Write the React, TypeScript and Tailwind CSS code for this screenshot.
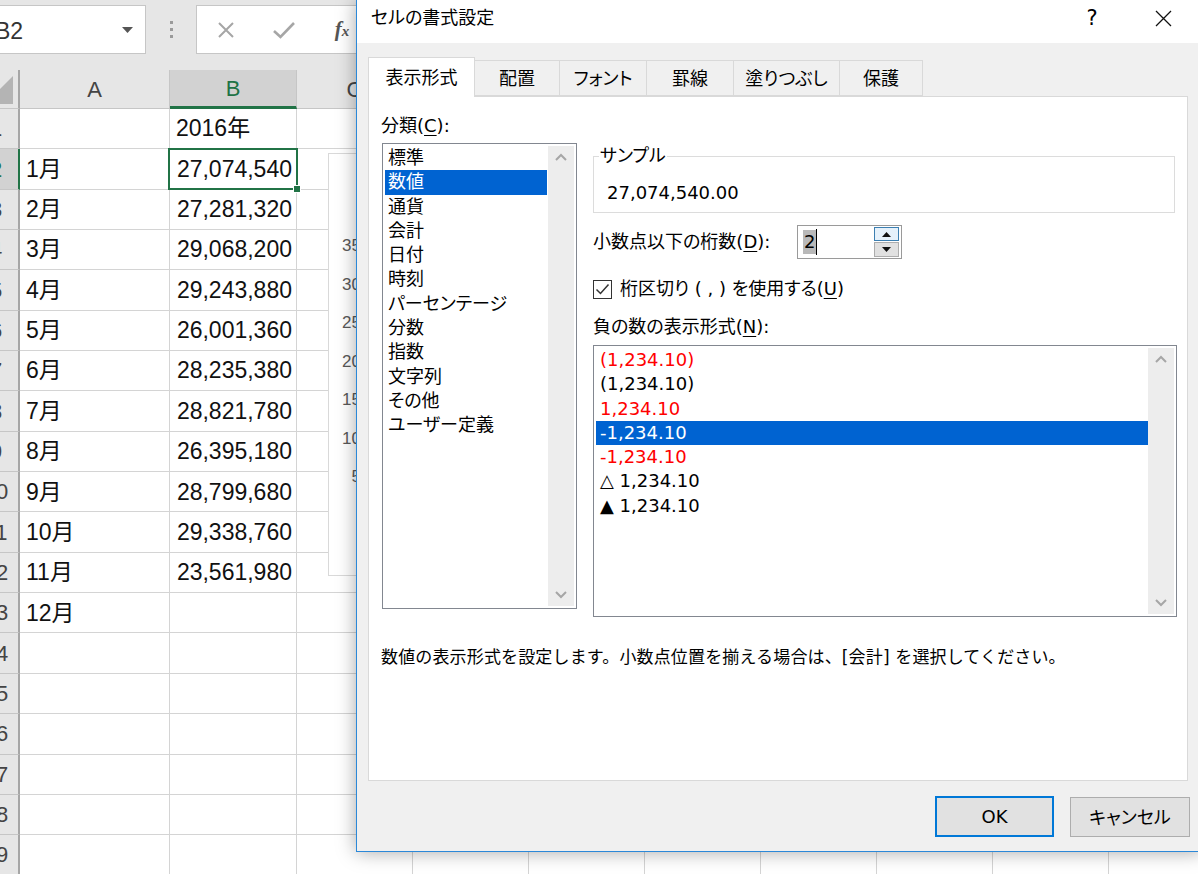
import React from "react";

const xl = "font-['Liberation_Sans','Noto_Sans_CJK_JP',sans-serif]";
const ui = "font-['DejaVu_Sans','Noto_Sans_CJK_JP',sans-serif] [font-feature-settings:'palt']";

const colWidths = ["w-[150px]", "w-[127px]", "w-[116px]", "w-[116px]", "w-[116px]", "w-[116px]", "w-[116px]", "w-[116px]", "w-[116px]", "w-[116px]"];
// only A-C are visible; the rest sit under the dialog
const colNames = ["A", "B", "C", "", "", "", "", "", "", ""];

const months = ["1月", "2月", "3月", "4月", "5月", "6月", "7月", "8月", "9月", "10月", "11月", "12月"];
const values = ["27,074,540", "27,281,320", "29,068,200", "29,243,880", "26,001,360", "28,235,380", "28,821,780", "26,395,180", "28,799,680", "29,338,760", "23,561,980", ""];

const categories = ["標準", "数値", "通貨", "会計", "日付", "時刻", "パーセンテージ", "分数", "指数", "文字列", "その他", "ユーザー定義"];

const negatives = [
  { text: "(1,234.10)", red: true },
  { text: "(1,234.10)", red: false },
  { text: "1,234.10", red: true },
  { text: "-1,234.10", red: false, selected: true },
  { text: "-1,234.10", red: true },
  { text: "△ 1,234.10", red: false },
  { text: "▲ 1,234.10", red: false },
];

const tabs = [
  { label: "配置", w: "w-[85px]" },
  { label: "フォント", w: "w-[87px]" },
  { label: "罫線", w: "w-[87px]" },
  { label: "塗りつぶし", w: "w-[106px]" },
  { label: "保護", w: "w-[83px]" },
];

function ScrollTrack() {
  return (
    <div className="w-[26px] shrink-0 bg-[#ededed] flex flex-col items-center justify-between py-[7px]">
      <svg width="12" height="8" viewBox="0 0 12 8">
        <path d="M1 7 L6 2 L11 7" fill="none" stroke="#a6a6a6" strokeWidth="2" />
      </svg>
      <svg width="12" height="8" viewBox="0 0 12 8">
        <path d="M1 1 L6 6 L11 1" fill="none" stroke="#a6a6a6" strokeWidth="2" />
      </svg>
    </div>
  );
}

function Sheet() {
  return (
    <div className={`${xl} absolute inset-0`}>
      {/* ribbon / formula bar */}
      <div className="flex h-[70px] pt-[5px]">
        <div className="-ml-[16px] w-[162px] h-[49px] bg-white border border-[#c6c6c6] flex items-center justify-between pl-[10px] pr-[12px] pt-[4px]">
          <span className="text-[23px] text-[#333]">B2</span>
          <svg width="11" height="6" viewBox="0 0 11 6" className="-mt-[4px]">
            <path d="M0 0 H11 L5.5 6 Z" fill="#555" />
          </svg>
        </div>
        <div className="w-[50px] flex flex-col items-center pt-[16px] gap-[4px]">
          <span className="w-[3px] h-[3px] bg-[#9a9a9a]" />
          <span className="w-[3px] h-[3px] bg-[#9a9a9a]" />
          <span className="w-[3px] h-[3px] bg-[#9a9a9a]" />
        </div>
        <div className="w-[700px] h-[49px] bg-white border border-[#c6c6c6] flex items-center">
          <div className="w-[58px] flex justify-center">
            <svg width="20" height="20" viewBox="0 0 20 20">
              <path d="M3 3 L17 17 M17 3 L3 17" stroke="#a6a6a6" strokeWidth="2" />
            </svg>
          </div>
          <div className="w-[58px] flex justify-center">
            <svg width="24" height="20" viewBox="0 0 24 20">
              <path d="M2 11 L8.5 17 L22 3" fill="none" stroke="#a6a6a6" strokeWidth="2.6" />
            </svg>
          </div>
          <div className="w-[58px] flex justify-center">
            <span className="font-['Liberation_Serif',serif] italic font-bold text-[21px] text-[#555]">
              f<span className="text-[15px]">x</span>
            </span>
          </div>
        </div>
      </div>

      {/* grid */}
      <div className="-ml-[26px]">
        <div className="flex h-[39px]">
          <div className="w-[46px] shrink-0 bg-[#e6e6e6] border-r-2 border-r-[#a6a6a6] border-b border-b-[#c6c6c6] flex items-end justify-end pr-[5px] pb-[4px]">
            <svg width="28" height="28" viewBox="0 0 28 28">
              <path d="M28 0 V28 H0 Z" fill="#b4b4b4" />
            </svg>
          </div>
          {colWidths.map((w, c) => (
            <div
              key={c}
              className={`${w} shrink-0 flex items-center justify-center text-[22px] border-r border-r-[#c6c6c6] ${
                c === 1 ? "bg-[#d2d2d2] text-[#217346] border-b-[3px] border-b-[#217346]" : "bg-[#e6e6e6] text-[#444] border-b border-b-[#c6c6c6]"
              }`}
            >
              {colNames[c]}
            </div>
          ))}
        </div>
        {Array.from({ length: 19 }, (_, i) => {
          const r = i + 1;
          const sel = r === 2;
          return (
            <div key={r} className="flex h-[40.35px]">
              <div
                className={`w-[46px] shrink-0 flex items-center justify-center text-[22px] border-b border-b-[#c6c6c6] border-r-2 ${
                  sel ? "bg-[#d2d2d2] text-[#217346] border-r-[#217346]" : "bg-[#e6e6e6] text-[#444] border-r-[#a6a6a6]"
                }`}
              >
                {r}
              </div>
              {colWidths.map((w, c) => {
                let content = "";
                let align = "justify-start pl-[6px]";
                if (c === 0 && r >= 2 && r <= 13) content = months[r - 2];
                if (c === 1 && r === 1) content = "2016年";
                if (c === 1 && r >= 2 && r <= 13) {
                  content = values[r - 2];
                  align = "justify-end pr-[4px]";
                }
                return (
                  <div
                    key={c}
                    className={`${w} shrink-0 relative bg-white border-r border-b border-[#d4d4d4] flex items-center ${align} text-[23px] text-[#111]`}
                  >
                    {content}
                    {c === 1 && sel && (
                      <div className="absolute -left-[2px] -top-[1px] -right-[2px] -bottom-[1px] border-2 border-[#217346] z-10">
                        <div className="absolute -right-[5px] -bottom-[5px] w-[8px] h-[8px] bg-[#217346] border border-white" />
                      </div>
                    )}
                  </div>
                );
              })}
            </div>
          );
        })}
      </div>

      {/* embedded chart */}
      <div className="absolute left-[328px] top-[153px] w-[400px] h-[423px] bg-white border border-[#d9d9d9] z-20">
        <div className="w-[32px] pt-[73px] flex flex-col items-end text-[17px] text-[#595959]">
          {["35", "30", "25", "20", "15", "10", "5"].map((t) => (
            <div key={t} className="h-[38.5px] leading-[38.5px]">
              {t}
            </div>
          ))}
        </div>
      </div>
    </div>
  );
}

function Dialog() {
  return (
    <div className={`${ui} absolute left-[356px] top-0 w-[846px] h-[852px] bg-[#f0f0f0] border-l border-b border-[#2b88d8] shadow-[0_0_18px_rgba(0,0,0,0.35)] z-30 text-black text-[18px]`}>
      {/* title bar */}
      <div className="h-[43px] bg-white flex items-start pt-[7px]">
        <div className="pl-[14px] leading-[22px] text-[18px]">セルの書式設定</div>
        <div className="ml-auto w-[46px] flex justify-center leading-[22px] text-[21px]">?</div>
        <div className="ml-[25px] w-[46px] mr-[16px] flex justify-center pt-[3px]">
          <svg width="17" height="17" viewBox="0 0 17 17">
            <path d="M1 1 L16 16 M16 1 L1 16" stroke="#111" strokeWidth="1.3" />
          </svg>
        </div>
      </div>

      {/* tabs */}
      <div className="pt-[14px] pl-[11px]">
        <div className="flex items-end h-[39px]">
          <div className="relative z-10 w-[107px] h-[40px] -mb-[1px] bg-white border border-b-0 border-[#d9d9d9] flex items-center justify-center">
            表示形式
          </div>
          {tabs.map((t) => (
            <div key={t.label} className={`${t.w} h-[36px] border border-l-0 border-[#d9d9d9] flex items-center justify-center`}>
              {t.label}
            </div>
          ))}
        </div>

        {/* panel */}
        <div className="w-[820px] h-[685px] bg-white border border-[#d9d9d9] px-[12px] pt-[18px]">
          <div className="flex">
            <div className="w-[196px] shrink-0">
              <div className="leading-[22px]">
                分類(<span className="underline underline-offset-[3px]">C</span>):
              </div>
              <div className="mt-[6px] ml-[1px] w-[195px] h-[466px] border border-[#828790] p-[2px] flex">
                <div className="flex-1 mr-[1px]">
                  {categories.map((c) => (
                    <div
                      key={c}
                      className={`h-[24.3px] leading-[24.3px] pl-[3px] ${c === "数値" ? "bg-[#0063d1] text-white" : ""}`}
                    >
                      {c}
                    </div>
                  ))}
                </div>
                <ScrollTrack />
              </div>
            </div>

            <div className="ml-[16px] w-[584px]">
              <fieldset className="mt-[30px] w-[582px] border border-[#dcdcdc] pb-[8px]">
                <legend className="ml-[5px] px-[1px] leading-[22px]">サンプル</legend>
                <div className="mt-[15px] pl-[13px] leading-[22px]">27,074,540.00</div>
              </fieldset>

              <div className="mt-[12px] h-[34px] flex items-center">
                <div className="w-[204px] shrink-0 leading-[22px]">
                  小数点以下の桁数(<span className="underline underline-offset-[3px]">D</span>):
                </div>
                <div className="w-[105px] h-[34px] border border-[#9a9a9a] bg-white flex">
                  <div className="flex-1 flex items-center pl-[5px]">
                    <span className="bg-[#b9b9b9] leading-[24px] px-[1px]">2</span>
                    <span className="w-[1px] h-[26px] bg-black" />
                  </div>
                  <div className="w-[25px] mr-[2px] py-[1px] flex flex-col gap-[1px]">
                    <div className="h-[14px] bg-[#e5f1fb] border border-[#3c7fb1] flex items-center justify-center">
                      <svg width="9" height="5" viewBox="0 0 9 5">
                        <path d="M0 5 H9 L4.5 0 Z" fill="#111" />
                      </svg>
                    </div>
                    <div className="h-[15px] bg-[#e1e1e1] border border-[#adadad] flex items-center justify-center">
                      <svg width="9" height="5" viewBox="0 0 9 5">
                        <path d="M0 0 H9 L4.5 5 Z" fill="#111" />
                      </svg>
                    </div>
                  </div>
                </div>
              </div>

              <div className="mt-[19px] h-[22px] flex items-center">
                <div className="w-[19px] h-[19px] border border-[#333] bg-white flex items-center justify-center">
                  <svg width="15" height="13" viewBox="0 0 15 13">
                    <path d="M1.5 6.5 L5.5 10.5 L13.5 1.5" fill="none" stroke="#333" strokeWidth="1.5" />
                  </svg>
                </div>
                <div className="ml-[8px] leading-[22px]">
                  桁区切り ( , ) を使用する(<span className="underline underline-offset-[3px]">U</span>)
                </div>
              </div>

              <div className="mt-[16px] leading-[22px]">
                負の数の表示形式(<span className="underline underline-offset-[3px]">N</span>):
              </div>
              <div className="mt-[7px] w-[584px] h-[272px] border border-[#828790] p-[2px] flex">
                <div className="flex-1">
                  {negatives.map((n, i) => (
                    <div
                      key={i}
                      className={`h-[24.3px] leading-[24.3px] pl-[4px] ${
                        n.selected ? "bg-[#0063d1] text-white" : n.red ? "text-[#ff0000]" : "text-black"
                      }`}
                    >
                      {n.text}
                    </div>
                  ))}
                </div>
                <ScrollTrack />
              </div>
            </div>
          </div>

          <div className="mt-[29px] leading-[22px] text-[17px] tracking-[0.15px] [font-feature-settings:normal]">
            数値の表示形式を設定します。小数点位置を揃える場合は、[会計] を選択してください。
          </div>
        </div>
      </div>

      {/* buttons */}
      <div className="mt-[15px] flex justify-end items-start gap-[16px] pr-[12px]">
        <div className="w-[119px] h-[41px] border-2 border-[#0078d7] bg-[#e1e1e1] flex items-center justify-center">OK</div>
        <div className="mt-[1px] w-[120px] h-[40px] border border-[#adadad] bg-[#e1e1e1] flex items-center justify-center">
          キャンセル
        </div>
      </div>
    </div>
  );
}

export default function App() {
  return (
    <div className="relative w-[1198px] h-[874px] overflow-hidden bg-[#e6e6e6]">
      <Sheet />
      <Dialog />
    </div>
  );
}
